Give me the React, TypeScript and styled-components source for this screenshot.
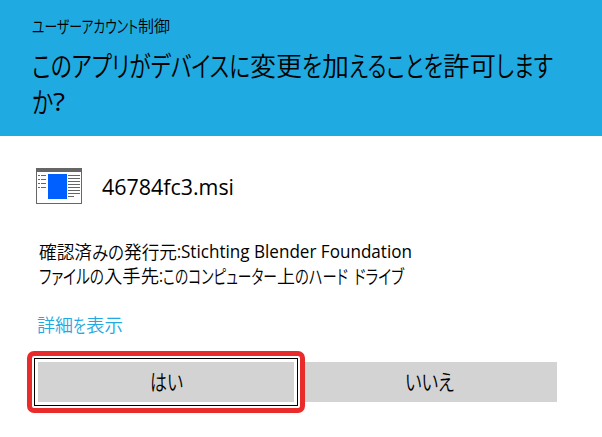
import React, { useLayoutEffect, useRef } from "react";
import styled, { createGlobalStyle } from "styled-components";

const GlobalStyle = createGlobalStyle`
  * { box-sizing: border-box; }
  body {
    margin: 0;
    background: #fff;
    color: #000;
    font-family: "Noto Sans", "Noto Sans CJK JP", sans-serif;
  }
`;

const Dialog = styled.main`
  width: 602px;
  height: 437px;
  overflow: hidden;
  background: #fff;
`;

const Header = styled.header`
  height: 136px;
  padding: 13px 32px 0;
  background: #1faae1;
`;

const Caption = styled.p`
  margin: 0 0 10px;
  font-size: 16px;
  line-height: 24px;
`;

const Title = styled.h1`
  margin: 0;
  font-size: 26px;
  font-weight: 300;
  line-height: 36px;
`;

const TextLine = styled.span`
  display: flex;
  align-items: center;
  height: 1lh;
  white-space: pre;
  font-family: "Noto Sans CJK JP", sans-serif;
  font-weight: 350;
`;

const RunBox = styled.span<{ $width: number; $gap?: number }>`
  display: block;
  flex: none;
  width: ${(p) => p.$width}px;
  margin-right: ${(p) => p.$gap ?? 0}px;
  line-height: 1em;
`;

const RunText = styled.span<{ $latin?: boolean }>`
  display: block;
  width: max-content;
  transform-origin: 0 50%;
  font-feature-settings: "palt";
  ${(p) => p.$latin && `font-family: "Open Sans", "Noto Sans", sans-serif; font-weight: 380;`}
`;

const Program = styled.section`
  display: flex;
  align-items: center;
  gap: 20px;
  height: 36px;
  margin: 32px 0 0 36px;
`;

const FileName = styled.div`
  font-size: 22px;
  line-height: 36px;
`;

const Details = styled.section`
  margin: 35px 0 0 39px;
  font-size: 18px;
  line-height: 24px;
`;

const MoreLink = styled.a`
  display: block;
  width: 86px;
  margin: 24px 0 0 37px;
  color: #1faae1;
  font-size: 18px;
  line-height: 26px;
`;

const Actions = styled.div`
  display: flex;
  gap: 7px;
  margin: 25px 0 0 38px;
`;

const Button = styled.button`
  position: relative;
  display: flex;
  justify-content: center;
  align-items: center;
  width: 256px;
  height: 40px;
  padding: 0 0 2px;
  border: 0;
  background: #d3d3d3;
  color: #000;
  font: inherit;
  font-size: 20px;
  line-height: 38px;
`;

const DefaultButton = styled(Button)`
  z-index: 1;
  outline: 1px solid #000;
  outline-offset: 3px;
  box-shadow: 0 0 0 6px #fff;

  &::after {
    content: "";
    position: absolute;
    inset: -11px;
    border: 5px solid #e92b2b;
    border-radius: 7px;
  }
`;

type RunProps = { text: string; width: number; gap?: number; latin?: boolean };

/* Condenses a run of characters to its width; kana are drawn slightly taller. */
function Run({ text, width, gap, latin }: RunProps) {
  const ref = useRef<HTMLSpanElement>(null);
  useLayoutEffect(() => {
    const el = ref.current;
    if (!el) return;
    const tall = /^[\u3040-\u30ff]+$/.test(text) ? 1.09 : 1;
    el.style.transform = `scale(${width / el.getBoundingClientRect().width}, ${tall})`;
    return () => {
      el.style.transform = "";
    };
  }, [width, text]);
  return (
    <RunBox $width={width} $gap={gap}>
      <RunText ref={ref} $latin={latin}>{text}</RunText>
    </RunBox>
  );
}

function ProgramIcon() {
  return (
    <svg width="46" height="36" viewBox="0 0 46 36" shapeRendering="crispEdges">
      <path fill="#fff" stroke="#666" d="M.5 .5h45v35h-45z" />
      <path fill="#666" d="M0 0h46v4H0z" />
      <path fill="#0060ff" d="M12 6h19v25H12z" />
      <path
        stroke="#666"
        d="M2 7.5h2m1 0h5M2 11.5h2m1 0h5M2 15.5h2m1 0h5M2 19.5h2m1 0h5M32 7.5h12M32 10.5h12M32 13.5h12M32 16.5h12M32 19.5h12M32 22.5h12M32 25.5h12M32 28.5h6"
      />
    </svg>
  );
}

export default function App() {
  return (
    <>
      <GlobalStyle />
      <Dialog>
        <Header>
          <Caption>
            <TextLine>
              <Run text="ユーザーアカウント" width={106} />
              <Run text="制御" width={32} />
            </TextLine>
          </Caption>
          <Title>
            <TextLine>
              <Run text="このアプリがデバイスに" width={218} />
              <Run text="変更" width={52} />
              <Run text="を" width={20} />
              <Run text="加" width={27} />
              <Run text="えることを" width={94} />
              <Run text="許可" width={53} />
              <Run text="します" width={57} />
            </TextLine>
            <TextLine>
              <Run text="か" width={21} />
              <Run text="?" width={12} latin />
            </TextLine>
          </Title>
        </Header>
        <Program>
          <ProgramIcon />
          <FileName>
            <TextLine>
              <Run text="46784fc3.msi" width={132} latin />
            </TextLine>
          </FileName>
        </Program>
        <Details>
          <TextLine>
            <Run text="確認済" width={53} />
            <Run text="みの" width={32} />
            <Run text="発行元" width={53} />
            <Run text=":" width={4} latin />
            <Run text="Stichting Blender Foundation" width={231} latin />
          </TextLine>
          <TextLine>
            <Run text="ファイルの" width={65} />
            <Run text="入手先" width={55} />
            <Run text=":" width={4} latin />
            <Run text="このコンピューター" width={114} />
            <Run text="上" width={18} />
            <Run text="のハード" width={53} gap={6} />
            <Run text="ドライブ" width={50} />
          </TextLine>
        </Details>
        <MoreLink>
          <TextLine>
            <Run text="詳細" width={36} />
            <Run text="を" width={13} />
            <Run text="表示" width={37} />
          </TextLine>
        </MoreLink>
        <Actions>
          <DefaultButton>
            <TextLine>
              <Run text="はい" width={33} />
            </TextLine>
          </DefaultButton>
          <Button>
            <TextLine>
              <Run text="いいえ" width={49} />
            </TextLine>
          </Button>
        </Actions>
      </Dialog>
    </>
  );
}
